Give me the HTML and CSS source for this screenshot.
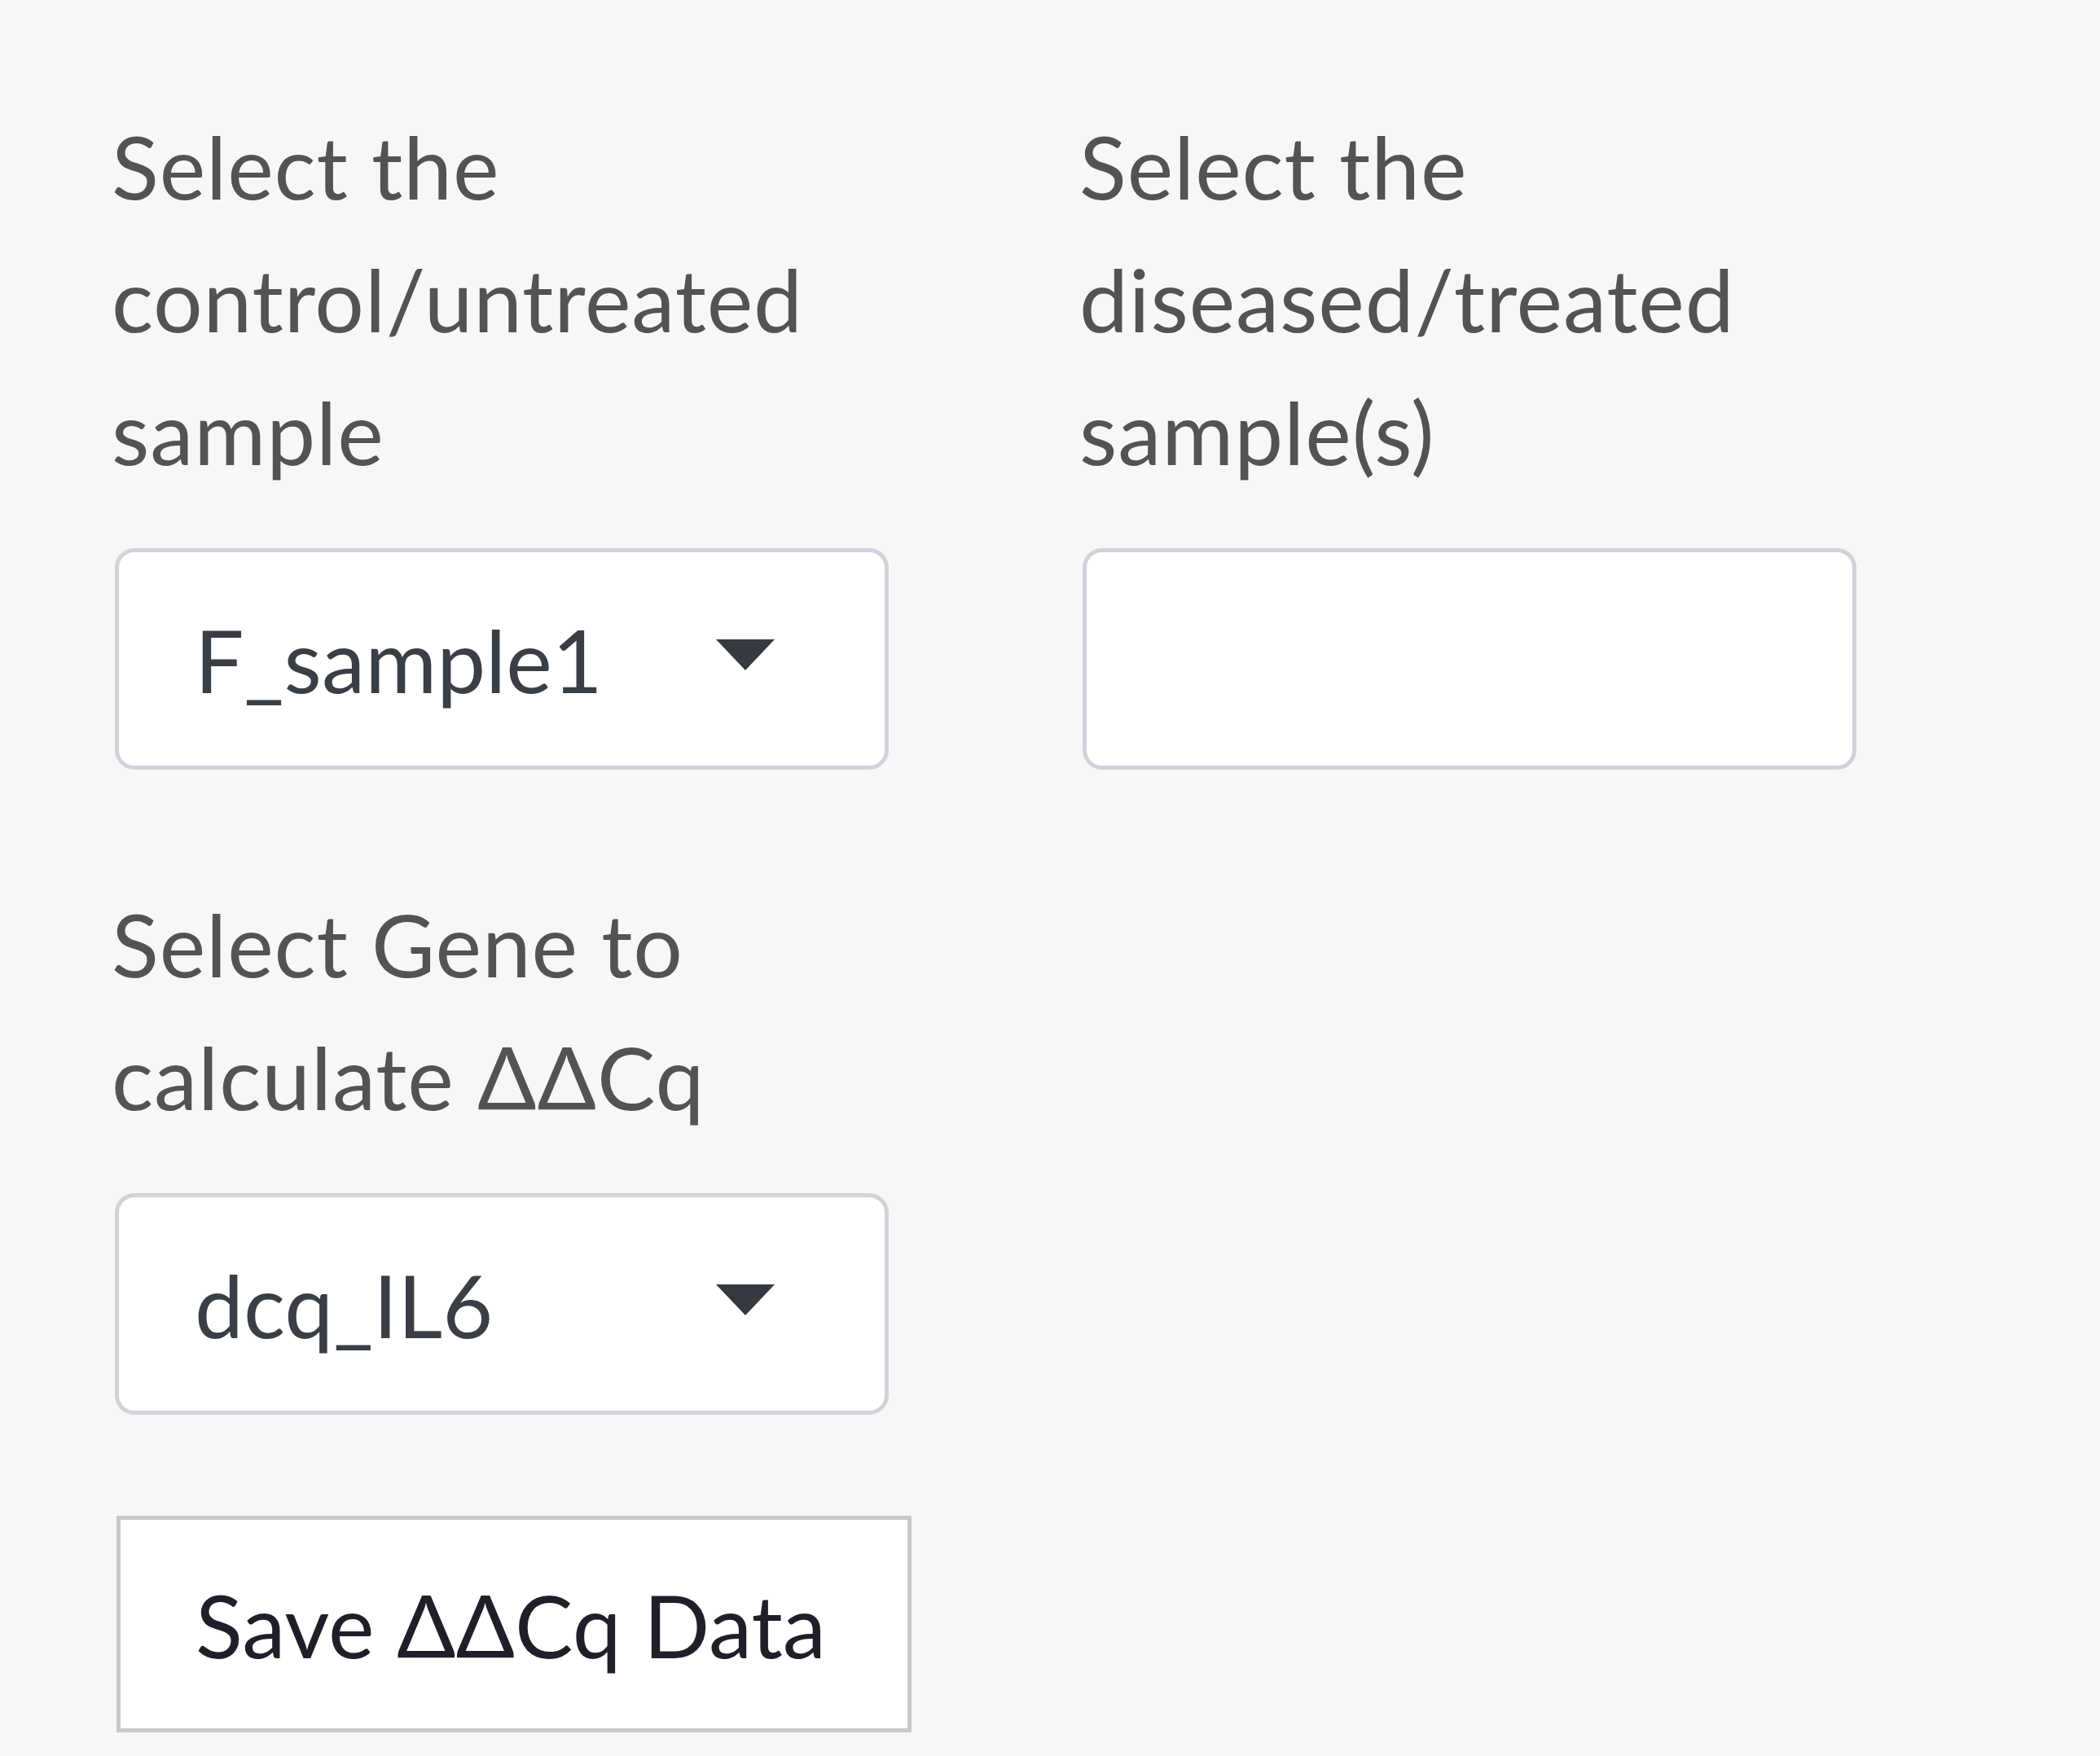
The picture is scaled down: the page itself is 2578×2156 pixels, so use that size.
FILE: index.html
```html
<!DOCTYPE html>
<html lang="en">
<head>
<meta charset="utf-8">
<title>ΔΔCq</title>
<link rel="stylesheet" href="styles.css">
</head>
<body>
<main class="panel">
  <div class="row">
    <div class="form-group">
      <label class="control-label">Select the control/untreated sample</label>
      <div class="select-control">
        <span class="select-value">F_sample1</span>
        <span class="caret"></span>
      </div>
    </div>
    <div class="form-group">
      <label class="control-label">Select the diseased/treated sample(s)</label>
      <div class="select-control"></div>
    </div>
  </div>
  <div class="row">
    <div class="form-group">
      <label class="control-label">Select Gene to calculate ΔΔCq</label>
      <div class="select-control">
        <span class="select-value">dcq_IL6</span>
        <span class="caret"></span>
      </div>
    </div>
  </div>
  <button class="btn-save" type="button">Save ΔΔCq Data</button>
</main>
</body>
</html>
```
FILE: styles.css
```css
html, body {
  margin: 0;
  padding: 0;
  background: #f7f7f7;
}

body {
  font-family: Lato, "Liberation Sans", sans-serif;
  font-size: 107px;
  line-height: 163px;
  color: #555555;
}

.panel {
  padding: 122px 0 0 141px;
}

.row {
  display: grid;
  grid-template-columns: 950px 950px;
  column-gap: 238px;
}

.form-group {
  margin-bottom: 132px;
}

.control-label {
  display: block;
  margin: 0 0 62px -4px;
  letter-spacing: 0.9px;
  color: #535353;
}

.select-control {
  box-sizing: border-box;
  height: 272px;
  width: 950px;
  border: 5px solid #d2d2da;
  border-radius: 24px;
  background: #ffffff;
  display: flex;
  align-items: center;
  padding: 0 135px 0 93px;
  color: #3a3f45;
}

.select-value {
  flex: 1;
  white-space: nowrap;
}

.caret {
  width: 0;
  height: 0;
  border-left: 36px solid transparent;
  border-right: 36px solid transparent;
  border-top: 38px solid #343a40;
  margin-top: -10px;
}

.btn-save {
  box-sizing: border-box;
  height: 266px;
  margin: -8px 0 0 2px;
  padding: 0 100px 0 92px;
  border: 5px solid #c9c9c9;
  border-radius: 0;
  background: #ffffff;
  font: inherit;
  color: #1f1f2a;
  cursor: pointer;
}
```
